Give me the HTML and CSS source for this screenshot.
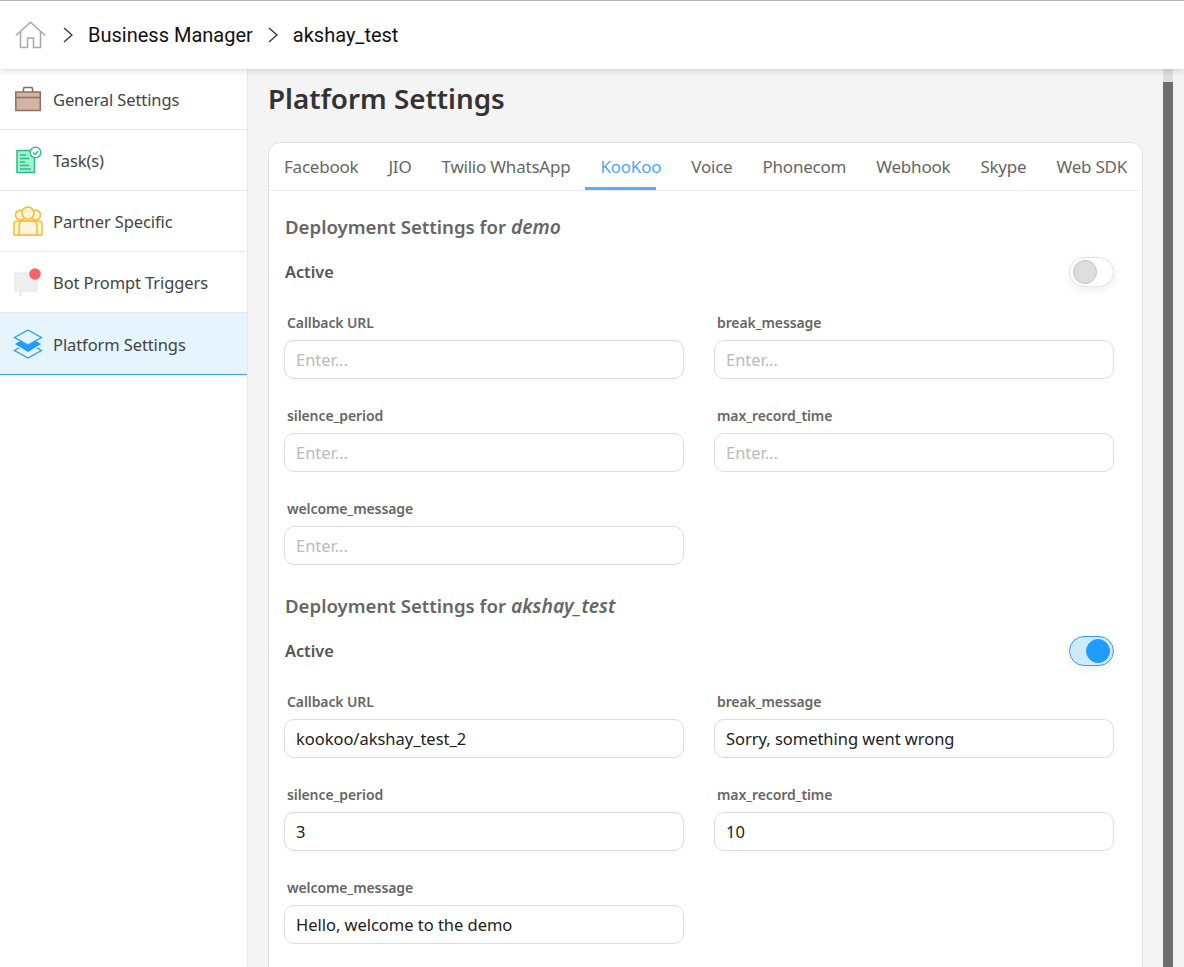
FILE: index.html
```html
<!DOCTYPE html>
<html lang="en">
<head>
<meta charset="utf-8">
<title>Platform Settings</title>
<link rel="stylesheet" href="styles.css">
</head>
<body>
<header class="topbar">
  <svg class="home" viewBox="0 0 32 28" width="32" height="28"><path d="M.8 14.500 15.500 1.200l14.700 13.300M5.500 11v15.500h7V17h6v9.500h7V11" fill="none" stroke="#a8a8a8" stroke-width="1.500"/></svg>
  <svg class="chev" viewBox="0 0 10 16" width="10" height="16"><path d="M1 1l8 7-8 7" fill="none" stroke="#333" stroke-width="1.300"/></svg>
  <span class="crumb">Business Manager</span>
  <svg class="chev" viewBox="0 0 10 16" width="10" height="16"><path d="M1 1l8 7-8 7" fill="none" stroke="#333" stroke-width="1.300"/></svg>
  <span class="crumb">akshay_test</span>
</header>
<div class="body">
  <nav class="sidebar">
    <a class="item">
      <svg class="ic" viewBox="0 0 30 26" width="30" height="26"><path d="M10.500 6V2.500q0-1 1-1h7q1 0 1 1V6" fill="none" stroke="#8a6a58" stroke-width="1.500"/><rect x="2.800" y="6" width="24.500" height="18.500" fill="#d2b4a2" stroke="#8f6f5e" stroke-width="1.500"/><path d="M2.800 11.500h24.500" stroke="#8f6f5e" stroke-width="1.500"/></svg>
      <span>General Settings</span>
    </a>
    <a class="item">
      <svg class="ic" viewBox="0 0 30 28" width="30" height="28"><rect x="4" y="4.500" width="17.500" height="22" fill="#9af5cc" stroke="#2fb98a" stroke-width="1.500"/><path d="M7 9h6M7 12.500h9M7 16h5M7 19.500h9M7 23h11" stroke="#2fb98a" stroke-width="1.300"/><circle cx="22.500" cy="6.500" r="5.300" fill="#fff" stroke="#2fb98a" stroke-width="1.300"/><path d="M20 6.500l2 2 3-3.500" fill="none" stroke="#2fb98a" stroke-width="1.500"/></svg>
      <span>Task(s)</span>
    </a>
    <a class="item">
      <svg class="ic" viewBox="0 0 30 30" width="30" height="30"><g fill="#fff5d8" stroke="#fbb92f" stroke-width="1.500"><circle cx="7.500" cy="9" r="5"/><circle cx="22.500" cy="9" r="5"/><path d="M1 29V18q0-3 4-3h20q4 0 4 3v11z"/><circle cx="15" cy="7" r="6"/><path d="M6 29V19q0-4 4-4h10q4 0 4 4v10z"/></g></svg>
      <span>Partner Specific</span>
    </a>
    <a class="item">
      <svg class="ic" viewBox="0 0 30 28" width="30" height="28"><path d="M2 5h22v18H9l-2 5v-5H2z" fill="#eee" stroke="#e6e6e6"/><circle cx="22" cy="6" r="5.800" fill="#f4646a"/></svg>
      <span>Bot Prompt Triggers</span>
    </a>
    <a class="item active">
      <svg class="ic" viewBox="0 0 30 30" width="30" height="30"><g fill="none" stroke="#1f9cff" stroke-width="1.300"><path d="M15 1 28.500 8.500 15 16 1.500 8.500z"/><path d="M6 19 1.500 21.500 15 29 28.500 21.500 24 19"/></g><path d="M7 12 15 16.500 23 12 28 15 15 23 2 15z" fill="#1f9cff"/></svg>
      <span>Platform Settings</span>
    </a>
  </nav>
  <main class="main">
    <div class="content">
      <h1 class="title">Platform Settings</h1>
      <section class="card">
        <div class="tabs">
          <span class="tab">Facebook</span>
          <span class="tab">JIO</span>
          <span class="tab">Twilio WhatsApp</span>
          <span class="tab on">KooKoo</span>
          <span class="tab">Voice</span>
          <span class="tab">Phonecom</span>
          <span class="tab">Webhook</span>
          <span class="tab">Skype</span>
          <span class="tab">Web SDK</span>
        </div>
        <div class="panel">
          <h2 class="dep">Deployment Settings for <em>demo</em></h2>
          <div class="active-row"><span>Active</span><span class="switch"><i></i></span></div>
          <div class="grid">
            <label class="field"><span>Callback URL</span><input placeholder="Enter..."></label>
            <label class="field"><span>break_message</span><input placeholder="Enter..."></label>
            <label class="field"><span>silence_period</span><input placeholder="Enter..."></label>
            <label class="field"><span>max_record_time</span><input placeholder="Enter..."></label>
            <label class="field"><span>welcome_message</span><input placeholder="Enter..."></label>
          </div>
          <h2 class="dep">Deployment Settings for <em>akshay_test</em></h2>
          <div class="active-row"><span>Active</span><span class="switch on"><i></i></span></div>
          <div class="grid">
            <label class="field"><span>Callback URL</span><input value="kookoo/akshay_test_2"></label>
            <label class="field"><span>break_message</span><input value="Sorry, something went wrong"></label>
            <label class="field"><span>silence_period</span><input value="3"></label>
            <label class="field"><span>max_record_time</span><input value="10"></label>
            <label class="field"><span>welcome_message</span><input value="Hello, welcome to the demo"></label>
          </div>
        </div>
      </section>
    </div>
    <div class="scroll"><div class="thumb"></div></div>
  </main>
</div>
</body>
</html>
```
FILE: styles.css
```css
* { box-sizing: border-box; }
html, body { margin: 0; height: 100%; overflow: hidden; }
body {
  font-family: "Noto Sans", "Open Sans", sans-serif;
  background: #f4f4f4;
  color: #333;
  display: flex;
  flex-direction: column;
  height: 967px;
}
.topbar {
  height: 69px;
  flex: none;
  background: #fff;
  border-top: 1px solid #b5b5b5;
  box-shadow: 0 2px 6px rgba(0,0,0,.14);
  display: flex;
  align-items: center;
  padding: 0 0 1px 15px;
  position: relative;
  z-index: 2;
  font-family: Roboto, sans-serif;
  font-size: 20px;
  color: #111;
}
.chev { margin: 0 15px 0 16px; }
.crumb + .chev { margin: 0 15px 0 15px; }
.body { flex: 1; display: flex; min-height: 0; }
.sidebar {
  width: 248px;
  flex: none;
  background: #fff;
  border-right: 1px solid #e8e8e8;
}
.item {
  height: 61px;
  display: flex;
  align-items: center;
  gap: 10px;
  padding-left: 13px;
  border-bottom: 1px solid #eaeaea;
  font-size: 16.500px;
  letter-spacing: -.1px;
  color: #444;
}
.item.active {
  height: 62px;
  padding-top: 1px;
  background: #e6f5fd;
  border-bottom: 1px solid #33a3e8;
}
.ic { flex: none; }
.main { flex: 1; display: flex; min-width: 0; }
.content { width: 895px; flex: none; padding: 9px 20px 0; overflow: hidden; }
.title {
  margin: 0 0 23px;
  font-size: 27.800px;
  line-height: 41px;
  font-weight: 600;
  color: #333;
}
.card {
  width: 875px;
  min-height: 900px;
  background: #fff;
  border: 1px solid #e0e0e0;
  border-radius: 12px 12px 0 0;
}
.tabs {
  height: 48px;
  display: flex;
  gap: 30px;
  padding: 0 0 0 15px;
  border-bottom: 1px solid #ececec;
  font-size: 17px;
  letter-spacing: -.22px;
  color: #666;
}
.tab { line-height: 47px; height: 47px; position: relative; white-space: nowrap; }
.tab.on { color: #4da9f5; }
.tab.on::after {
  content: "";
  position: absolute;
  left: -15px; right: 5px; bottom: 0;
  height: 3px;
  background: #5caef8;
}
.panel { padding: 22px 28px 0 15px; }
.dep {
  margin: 0;
  padding-left: 1px;
  font-size: 18.600px;
  line-height: 28px;
  font-weight: 600;
  color: #666;
}
.dep em { font-style: italic; font-size: 19.300px; }
.active-row {
  height: 32px;
  margin-top: 15px;
  padding-left: 1px;
  display: flex;
  align-items: center;
  justify-content: space-between;
  font-size: 16.300px;
  font-weight: 600;
  color: #555;
}
.switch {
  width: 45px; height: 30px;
  border: 1px solid #e4e4e4;
  border-radius: 15px;
  background: #fff;
  position: relative;
  box-shadow: 0 3px 8px rgba(0,0,0,.07);
}
.switch i {
  position: absolute;
  left: 3px; top: 2px;
  width: 24px; height: 24px;
  border-radius: 50%;
  background: #ddd;
  border: 1px solid #c4c4c4;
}
.switch.on { border-color: #2b9ff0; background: linear-gradient(90deg,#cfe9fd,#cfe9fd 60%,#dbe4ea); }
.switch.on i { left: 16px; background: #1e9cff; border-color: #1e9cff; }
.grid {
  display: grid;
  grid-template-columns: 400px 400px;
  column-gap: 30px;
  row-gap: 27px;
  margin-top: 25px;
  margin-bottom: 27px;
}
.field { display: block; }
.field span {
  display: block;
  padding-left: 3px;
  font-size: 14px;
  line-height: 20px;
  font-weight: 600;
  color: #666;
  letter-spacing: -.1px;
  margin-bottom: 7px;
}
.field input {
  display: block;
  width: 100%;
  height: 39px;
  border: 1px solid #ddd;
  border-radius: 10px;
  padding: 0 11px;
  outline: none;
  font: 16.500px "Noto Sans", "Open Sans", sans-serif;
  letter-spacing: -.03px;
  color: #222;
  background: #fff;
}
.field input::placeholder { color: #bbb; opacity: 1; }
.scroll {
  width: 10px;
  margin-left: 20px;
  background: #ddd;
  padding-top: 13px;
  flex: none;
}
.thumb { height: 100%; background: #6e6e6e; }
```
